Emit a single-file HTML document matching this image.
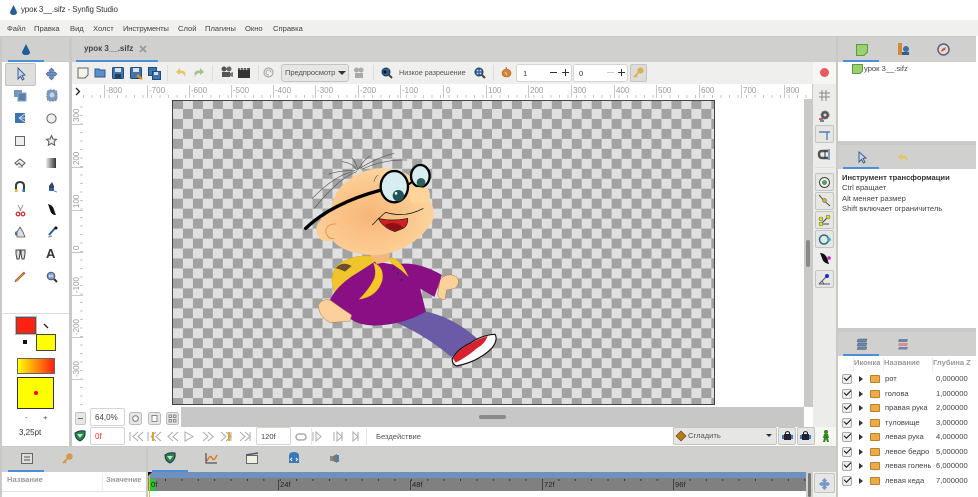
<!DOCTYPE html>
<html><head><meta charset="utf-8"><style>
html,body{margin:0;padding:0;background:#fff}
#r{position:relative;width:978px;height:497px;overflow:hidden;background:#fff;font-family:"Liberation Sans","DejaVu Sans",sans-serif;font-size:7.6px;color:#444;filter:blur(.35px)}
.a{position:absolute}
.t{position:absolute;white-space:nowrap;line-height:10px}
.g{background:#d0d0ce}
.b{position:absolute;box-sizing:border-box;border:1px solid #c4c4c2;border-radius:2px;background:#e6e6e4}
.e{position:absolute;box-sizing:border-box;border:1px solid #d4d4d2;border-radius:2px;background:#fff}
.u{position:absolute;height:2px;background:#4a90d9}
.v{position:absolute;color:#999;font-size:8px;line-height:10px;white-space:nowrap;transform:rotate(-90deg);transform-origin:0 0}
svg{position:absolute;overflow:visible}
.l{color:#999;top:86px;position:absolute;font-size:8px;line-height:9px}
.k{position:absolute;top:85px;width:1px;height:13px;background:#c8c8c8}
.bk{position:absolute;width:10px;height:10px;left:842px;box-sizing:border-box;border:1px solid #aaa;border-radius:2px;background:#eee}
.bk:after{content:"";position:absolute;left:1px;top:0;width:6px;height:3px;border-left:1.6px solid #111;border-bottom:1.6px solid #111;transform:rotate(-45deg)}
.ar{position:absolute;left:859px;width:0;height:0;border-left:4px solid #333;border-top:3px solid transparent;border-bottom:3px solid transparent}
.fo{position:absolute;left:870px;width:10px;height:8px;background:#eeaa44;border:1px solid #b88030;box-sizing:border-box;border-radius:1px}
</style></head><body><div id="r">

<!-- title -->
<svg style="left:9px;top:5px" width="9" height="11" viewBox="0 0 9 11"><path d="M4.5 0L8 7Q8 10 4.5 10Q1 10 1 7Z" fill="#2a5f96"/></svg>
<div class="t" style="left:21px;top:5px;font-size:8px;letter-spacing:-.12px;color:#333">урок 3__.sifz - Synfig Studio</div>

<!-- menu -->
<div class="a" style="left:0;top:20px;width:978px;height:16px;background:#f0f0ef"></div>
<div class="t" style="left:7px;top:24px">Файл</div><div class="t" style="left:34px;top:24px">Правка</div><div class="t" style="left:70px;top:24px">Вид</div><div class="t" style="left:93px;top:24px">Холст</div><div class="t" style="left:123px;top:24px;letter-spacing:-.15px">Инструменты</div><div class="t" style="left:178px;top:24px">Слой</div><div class="t" style="left:205px;top:24px">Плагины</div><div class="t" style="left:245px;top:24px">Окно</div><div class="t" style="left:273px;top:24px">Справка</div>

<!-- base gray -->
<div class="a" style="left:0;top:36px;width:978px;height:461px;background:#c9c9c7"></div>

<!-- left panel -->
<div class="a g" style="left:2px;top:37px;width:67px;height:24px"></div>
<div class="u" style="left:8px;top:60px;width:36px"></div>
<svg style="left:21px;top:44px" width="10" height="12" viewBox="0 0 10 12"><path d="M5 0L9 8Q9 11 5 11Q1 11 1 8Z" fill="#1f5c9c"/></svg>
<div class="a" style="left:2px;top:62px;width:67px;height:384px;background:#fff"></div>
<div class="a" style="left:3px;top:313px;width:66px;height:1px;background:#ddd"></div>
<div class="b" style="left:5px;top:63px;width:31px;height:23px;background:#dededc"></div>

<!-- tools -->
<svg style="left:15px;top:67px" width="11" height="14" viewBox="0 0 11 14"><path d="M3 1L3 12L5.5 9.5L7.5 13L9 12L7 8.5L10 8Z" fill="#c8d4e8" stroke="#41608f"/></svg>
<svg style="left:45px;top:67px" width="13" height="14" viewBox="0 0 13 14"><path d="M6.5 1L9 3.5L7.5 5.5L10 5L12 7L10 9L7.5 8.5L9 10.5L6.5 13L4 10.5L5.5 8.5L3 9L1 7L3 5L5.5 5.5L4 3.5Z" fill="#6d8fc0" stroke="#47679a" stroke-width=".6"/></svg>
<svg style="left:14px;top:90px" width="13" height="12"><rect x="0" y="0" width="8" height="7" fill="#7894b8"/><rect x="4" y="3" width="8" height="8" fill="#5a7eb0" stroke="#8aa3c6"/></svg>
<svg style="left:46px;top:89px" width="12" height="13"><rect x="1" y="1" width="10" height="11" rx="3" fill="#7f97bd" stroke="#6d86ad" stroke-dasharray="2 1"/><circle cx="6" cy="6" r="2.5" fill="#c7d3e5"/></svg>
<svg style="left:14px;top:112px" width="12" height="12"><rect x="1" y="1" width="10" height="10" fill="#3f74ae"/><path d="M5 6L11 2M5 6L11 6M5 6L11 10" stroke="#cfe0f0" fill="none"/></svg>
<svg style="left:46px;top:113px" width="11" height="11"><circle cx="5.5" cy="5.5" r="4.6" fill="#eee" stroke="#666"/></svg>
<svg style="left:15px;top:136px" width="10" height="10"><rect x=".5" y=".5" width="9" height="9" fill="#eee" stroke="#666"/></svg>
<svg style="left:46px;top:135px" width="11" height="11" viewBox="0 0 11 11"><path d="M5.5 .5L7 4L10.5 4.3L8 6.7L8.7 10.3L5.5 8.500L2.3 10.3L3 6.7L.5 4.3L4 4Z" fill="#eee" stroke="#555"/></svg>
<svg style="left:14px;top:158px" width="12" height="11" viewBox="0 0 12 11"><path d="M1 5L6 1L11 5L8 8L5 5L3 7Z" fill="#eee" stroke="#555"/><path d="M4 9L9 9" stroke="#999"/></svg>
<svg style="left:46px;top:158px" width="10" height="10"><defs><linearGradient id="gr"><stop offset="0" stop-color="#eee"/><stop offset="1" stop-color="#333"/></linearGradient></defs><rect width="10" height="10" fill="url(#gr)"/></svg>
<svg style="left:14px;top:181px" width="12" height="12" viewBox="0 0 12 12"><path d="M2 10V5Q2 1 6 1Q10 1 10 5V10" fill="none" stroke="#3a3a3a" stroke-width="2"/><rect x="1" y="8" width="2.5" height="3" fill="#e4b530"/><rect x="8.5" y="8" width="2.5" height="3" fill="#2e73b5"/></svg>
<svg style="left:47px;top:181px" width="11" height="12" viewBox="0 0 11 12"><path d="M2 5L5 1L7 5V9H2Z" fill="#33485f"/><path d="M2 7H7V10H2Z" fill="#2f62a0"/><path d="M7 10L10 11" stroke="#6b94c4"/></svg>
<svg style="left:15px;top:204px" width="11" height="13" viewBox="0 0 11 13"><path d="M3 1L6 7M8 1L5 7" stroke="#999" fill="none"/><circle cx="3" cy="10" r="1.8" fill="none" stroke="#c73a3a" stroke-width="1.3"/><circle cx="8" cy="10" r="1.8" fill="none" stroke="#c73a3a" stroke-width="1.3"/></svg>
<svg style="left:47px;top:204px" width="10" height="12" viewBox="0 0 10 12"><path d="M1 0Q6 1 7 6L9 11Q4 11 3 6Z" fill="#111"/></svg>
<svg style="left:14px;top:226px" width="12" height="12" viewBox="0 0 12 12"><path d="M6 1L9 6L11 11H3L3 6Z" fill="#ddd" stroke="#555" stroke-width=".8"/><path d="M1 6L3 5V10L1 9Z" fill="#3a78b8"/></svg>
<svg style="left:47px;top:226px" width="11" height="12" viewBox="0 0 11 12"><path d="M9 1L2 9" stroke="#2560a0" stroke-width="2"/><circle cx="9" cy="2" r="1.5" fill="#111"/><path d="M1 11L5 10" stroke="#888"/></svg>
<svg style="left:15px;top:249px" width="11" height="11" viewBox="0 0 11 11"><path d="M1 1H5V5L4 10H2L1 5ZM6 1H10V5L9 10H7L6 5Z" fill="#ddd" stroke="#444"/></svg>
<div class="t" style="left:46px;top:247px;font:bold 13px/14px 'Liberation Sans',sans-serif;color:#333">A</div>
<svg style="left:14px;top:271px" width="12" height="12" viewBox="0 0 12 12"><path d="M10 1L11 2.5L3 10L1 11L1.5 9Z" fill="#d9964a" stroke="#8b5a2b" stroke-width=".6"/><path d="M9.5 1L11 2.5L10 3.5L8.5 2Z" fill="#d05050"/></svg>
<svg style="left:46px;top:271px" width="12" height="12" viewBox="0 0 12 12"><circle cx="5" cy="5" r="3.8" fill="#7ba4d4" stroke="#555"/><path d="M8 8L11 11" stroke="#333" stroke-width="2"/><path d="M3 5H7" stroke="#fff"/></svg>

<!-- colours -->
<div class="a" style="left:16px;top:317px;width:20px;height:17px;box-sizing:border-box;background:#ff2112;border:1px solid #555;outline:1px solid #bbb"></div>
<div class="a" style="left:36px;top:334px;width:20px;height:17px;box-sizing:border-box;background:#ff0;border:1px solid #444"></div>
<svg style="left:43px;top:323px" width="6" height="6"><path d="M1 1L5 5" stroke="#222" stroke-width="1.3"/></svg>
<div class="a" style="left:23px;top:340px;width:4px;height:4px;background:#111"></div>
<div class="a" style="left:17px;top:358px;width:38px;height:16px;box-sizing:border-box;border:1px solid #666;background:linear-gradient(90deg,#ff0,#ff2112)"></div>
<div class="a" style="left:17px;top:377px;width:37px;height:32px;box-sizing:border-box;border:1px solid #333;background:#ff0"></div>
<div class="a" style="left:34px;top:391px;width:4px;height:4px;border-radius:50%;background:#f00"></div>
<div class="t" style="left:25px;top:413px">-</div><div class="t" style="left:43px;top:413px">+</div>
<div class="t" style="left:19px;top:428px;color:#333;font-size:8px">3,25pt</div>

<!-- tab strip -->
<div class="a g" style="left:72px;top:37px;width:764px;height:25px"></div>
<div class="u" style="left:76px;top:60px;width:82px"></div>
<div class="t" style="left:84px;top:44px;font-weight:bold;font-size:8px;color:#444">урок 3__.sifz</div>
<svg style="left:139px;top:45px" width="8" height="8"><path d="M1 1L7 7M7 1L1 7" stroke="#999" stroke-width="1.6"/></svg>

<!-- toolbar -->
<div class="a" style="left:72px;top:62px;width:741px;height:22px;background:#efefee"></div>
<svg style="left:76px;top:66px" width="14" height="14" viewBox="0 0 14 14"><path d="M2 2H12V9L9 12H2Z" fill="#f4f4e8" stroke="#666"/></svg>
<svg style="left:94px;top:67px" width="13" height="12"><path d="M1 2H5L6 3H11V10H1Z" fill="#5a8fc7" stroke="#2e5a8c"/></svg>
<svg style="left:112px;top:67px" width="12" height="12"><rect x=".5" y=".5" width="11" height="11" rx="1" fill="#3f75ae" stroke="#1f4a7a"/><rect x="3" y="1" width="6" height="4" fill="#dde"/><rect x="3" y="7" width="6" height="4" fill="#1f3d60"/></svg>
<svg style="left:130px;top:67px" width="13" height="13"><rect x=".5" y=".5" width="11" height="11" rx="1" fill="#3f75ae" stroke="#1f4a7a"/><rect x="3" y="1" width="6" height="4" fill="#dde"/><path d="M7 8L12 12" stroke="#e08a20" stroke-width="2.5"/></svg>
<svg style="left:148px;top:67px" width="13" height="13"><rect x=".5" y=".5" width="8" height="8" fill="#3f75ae" stroke="#1f4a7a"/><rect x="4.5" y="4.5" width="8" height="8" fill="#3f75ae" stroke="#1f4a7a"/><rect x="6" y="5" width="4" height="3" fill="#dde"/></svg>
<div class="a" style="left:167px;top:65px;width:1px;height:16px;background:#ddd"></div>
<svg style="left:175px;top:67px" width="12" height="11" viewBox="0 0 12 11"><path d="M5 1L1 5L5 8V6Q9 6 10 10Q12 3 5 3.5Z" fill="#e6c565"/></svg>
<svg style="left:193px;top:67px" width="12" height="11" viewBox="0 0 12 11"><path d="M7 1L11 5L7 8V6Q3 6 2 10Q0 3 7 3.5Z" fill="#9cc48c"/></svg>
<div class="a" style="left:212px;top:65px;width:1px;height:16px;background:#ddd"></div>
<svg style="left:220px;top:66px" width="13" height="13"><circle cx="4" cy="3" r="2.5" fill="#555"/><circle cx="9" cy="3" r="2.5" fill="#666"/><rect x="2" y="6" width="8" height="5" fill="#555"/><path d="M10 7L13 6V11L10 10Z" fill="#777"/></svg>
<svg style="left:238px;top:67px" width="12" height="12"><rect y="3" width="12" height="8" fill="#333"/><path d="M0 1H12V3H0Z" fill="#555"/><path d="M2 1L3 3M5 1L6 3M8 1L9 3" stroke="#ddd"/></svg>
<div class="a" style="left:258px;top:65px;width:1px;height:16px;background:#ddd"></div>
<svg style="left:263px;top:67px" width="11" height="11"><circle cx="5.5" cy="5.5" r="4.5" fill="none" stroke="#aaa" stroke-width="1.2"/><path d="M8 5.5A2.5 2.5 0 1 0 6 8" fill="none" stroke="#aaa"/></svg>
<div class="b" style="left:281px;top:64px;width:68px;height:18px;border-radius:3px"></div>
<div class="t" style="left:285px;top:68px;color:#555;letter-spacing:-.1px">Предпросмотр</div>
<div class="a" style="left:338px;top:71px;width:0;height:0;border-left:4px solid transparent;border-right:4px solid transparent;border-top:4px solid #333"></div>
<svg style="left:353px;top:67px" width="12" height="12"><circle cx="3.5" cy="3" r="2.5" fill="#aaa"/><circle cx="8" cy="3" r="2.5" fill="#aaa"/><rect x="2" y="6" width="8" height="5" fill="#aaa"/></svg>
<div class="a" style="left:373px;top:65px;width:1px;height:16px;background:#ddd"></div>
<svg style="left:381px;top:67px" width="12" height="12"><circle cx="5" cy="5" r="4" fill="#2f5f95" stroke="#1c3c60"/><circle cx="4" cy="5" r="1.5" fill="#111"/><path d="M8 8L11 11" stroke="#444" stroke-width="2"/></svg>
<div class="t" style="left:399px;top:68px;color:#555;font-size:7.2px">Низкое разрешение</div>
<svg style="left:474px;top:67px" width="12" height="12"><circle cx="5" cy="5" r="4" fill="#2f5f95" stroke="#1c3c60"/><circle cx="3.5" cy="3.5" r="1" fill="#bcd"/><circle cx="6.5" cy="6.5" r="1" fill="#bcd"/><circle cx="6.5" cy="3.5" r="1" fill="#bcd"/><circle cx="3.5" cy="6.5" r="1" fill="#bcd"/><path d="M8 8L11 11" stroke="#444" stroke-width="2"/></svg>
<div class="a" style="left:493px;top:65px;width:1px;height:16px;background:#ddd"></div>
<svg style="left:501px;top:67px" width="11" height="11"><path d="M5 0L6 2Q10 3 10 6Q10 10 5.5 10Q1 10 1 6Q1 3 5 2Z" fill="#d4823a" stroke="#a05c20" stroke-width=".5"/><path d="M4 5L6 8" stroke="#f2cfa8"/></svg>
<div class="e" style="left:516px;top:64px;width:32px;height:18px;border-right:0;border-radius:3px 0 0 3px"></div><div class="t" style="left:523px;top:69px;color:#333">1</div>
<div class="e" style="left:548px;top:64px;width:24px;height:18px;border-left:0;border-radius:0 3px 3px 0"></div>
<div class="a" style="left:550px;top:72px;width:7px;height:1.3px;background:#333"></div><div class="a" style="left:565px;top:69px;width:1.3px;height:7px;background:#333"></div><div class="a" style="left:562px;top:72px;width:7px;height:1.3px;background:#333"></div>
<div class="e" style="left:573px;top:64px;width:32px;height:18px;border-right:0;border-radius:3px 0 0 3px"></div><div class="t" style="left:579px;top:69px;color:#333">0</div>
<div class="e" style="left:605px;top:64px;width:23px;height:18px;border-left:0;border-radius:0 3px 3px 0"></div>
<div class="a" style="left:607px;top:72px;width:7px;height:1.3px;background:#ccc"></div><div class="a" style="left:621px;top:69px;width:1.3px;height:7px;background:#333"></div><div class="a" style="left:618px;top:72px;width:7px;height:1.3px;background:#333"></div>
<div class="b" style="left:630px;top:64px;width:17px;height:18px;background:#dcdcd8"></div>
<svg style="left:632px;top:66px" width="13" height="13" viewBox="0 0 13 13"><circle cx="8.5" cy="4.5" r="3" fill="#e0ac50"/><path d="M6.5 6.5L2 11M3.5 9.5L5 11" stroke="#e0ac50" stroke-width="1.6"/></svg>

<!-- ruler -->
<div class="a" style="left:72px;top:84px;width:740px;height:15px;background:#fff"></div>
<div class="a" style="left:83px;top:95px;width:729px;height:3px;background-image:linear-gradient(90deg,#c8c8c8 1px,transparent 1px);background-size:8.5px 3px"></div>
<svg style="left:75px;top:87px" width="6" height="9"><path d="M1 1L4.5 4.5L1 8" stroke="#222" stroke-width="1.3" fill="none"/></svg>
<div class="k" style="left:104px"></div><div class="l" style="left:106px">-800</div>
<div class="k" style="left:147px"></div><div class="l" style="left:149px">-700</div>
<div class="k" style="left:189px"></div><div class="l" style="left:191px">-600</div>
<div class="k" style="left:231px"></div><div class="l" style="left:233px">-500</div>
<div class="k" style="left:273px"></div><div class="l" style="left:275px">-400</div>
<div class="k" style="left:315px"></div><div class="l" style="left:317px">-300</div>
<div class="k" style="left:358px"></div><div class="l" style="left:360px">-200</div>
<div class="k" style="left:400px"></div><div class="l" style="left:402px">-100</div>
<div class="k" style="left:443px"></div><div class="l" style="left:446px">0</div>
<div class="k" style="left:486px"></div><div class="l" style="left:488px">100</div>
<div class="k" style="left:528px"></div><div class="l" style="left:530px">200</div>
<div class="k" style="left:571px"></div><div class="l" style="left:573px">300</div>
<div class="k" style="left:614px"></div><div class="l" style="left:616px">400</div>
<div class="k" style="left:656px"></div><div class="l" style="left:658px">500</div>
<div class="k" style="left:699px"></div><div class="l" style="left:701px">600</div>
<div class="k" style="left:741px"></div><div class="l" style="left:743px">700</div>
<div class="k" style="left:784px"></div><div class="l" style="left:786px">800</div>

<!-- canvas white + vertical ruler -->
<div class="a" style="left:72px;top:99px;width:732px;height:308px;background:#fff"></div>
<div class="a" style="left:80px;top:99px;width:3px;height:308px;background-image:linear-gradient(0deg,#c8c8c8 1px,transparent 1px);background-size:3px 8.5px"></div>
<div class="a" style="left:72px;top:124px;width:11px;height:1px;background:#c8c8c8"></div><div class="v" style="left:72px;top:122px">300</div>
<div class="a" style="left:72px;top:167px;width:11px;height:1px;background:#c8c8c8"></div><div class="v" style="left:72px;top:165px">200</div>
<div class="a" style="left:72px;top:210px;width:11px;height:1px;background:#c8c8c8"></div><div class="v" style="left:72px;top:208px">100</div>
<div class="a" style="left:72px;top:252px;width:11px;height:1px;background:#c8c8c8"></div><div class="v" style="left:72px;top:250px">0</div>
<div class="a" style="left:72px;top:295px;width:11px;height:1px;background:#c8c8c8"></div><div class="v" style="left:72px;top:293px">-100</div>
<div class="a" style="left:72px;top:337px;width:11px;height:1px;background:#c8c8c8"></div><div class="v" style="left:72px;top:335px">-200</div>
<div class="a" style="left:72px;top:379px;width:11px;height:1px;background:#c8c8c8"></div><div class="v" style="left:72px;top:377px">-300</div>

<!-- checker -->
<div class="a" style="left:172px;top:100px;width:543px;height:305px;box-sizing:border-box;border:1px solid #444;background-color:#e0e0e0;background-image:conic-gradient(#a2a2a2 25%,transparent 0 50%,#a2a2a2 0 75%,transparent 0);background-size:19.95px 19.95px;background-position:9.97px -2px"></div>

<!-- character -->
<svg style="left:295px;top:140px" width="215" height="240" viewBox="0 0 645 720">
<path d="M110 420Q112 385 135 370Q180 340 240 350L260 420L180 470L120 470Z" fill="#f0c42c" stroke="#c89a18"/>
<path d="M122 385Q140 362 170 378L150 395Q130 385 122 385Z" fill="#6b5030"/>
<path d="M435 420Q455 395 485 410Q498 430 480 445L455 450L450 478Q430 480 428 462Z" fill="#fcd09a" stroke="#b07a50" stroke-width="1.5"/>
<path d="M305 548L390 515Q470 530 545 595Q520 625 468 650Q400 590 305 548Z" fill="#6b5aa6" stroke="#5b4d90"/>
<path d="M472 655Q490 625 525 610Q560 585 600 583Q610 600 590 625Q550 665 485 678Q470 672 472 655Z" fill="#fff" stroke="#111" stroke-width="3.500"/>
<path d="M474 655Q490 628 525 612Q550 596 578 588Q570 612 545 625Q520 648 482 668Z" fill="#d8212e"/>
<path d="M240 365L300 375Q360 360 440 405L418 470L375 445L392 515Q320 555 240 556Q190 555 165 535L105 480Q125 440 170 410Q210 385 240 365Z" fill="#8b0f84" stroke="#6c0a66"/>
<path d="M280 355Q310 345 340 410L318 390L290 370Z" fill="#f4c62a" stroke="#c99c18"/>
<path d="M235 368Q268 380 262 420Q248 470 192 478Q225 445 238 415Q245 395 235 368Z" fill="#f4c62a" stroke="#c99c18"/>
<circle cx="296" cy="385" r="3" fill="#2a2a5a"/><circle cx="308" cy="400" r="3" fill="#2a2a5a"/><circle cx="319" cy="420" r="3" fill="#2a2a5a"/>
<path d="M105 480Q80 475 70 495Q70 530 105 548L165 543L170 525L140 505Z" fill="#fcd09a" stroke="#b07a50" stroke-width="1.5"/>
<path d="M225 345L285 340L280 365L245 372Z" fill="#f5b878"/>
<defs><radialGradient id="sk" cx=".45" cy=".55" r=".65"><stop offset="0" stop-color="#f8b678"/><stop offset=".55" stop-color="#fbc88e"/><stop offset="1" stop-color="#fddaa6"/></radialGradient></defs>
<path d="M110 200C120 130 200 80 270 85C320 85 350 110 385 135C405 145 408 165 400 178C425 205 420 245 395 268C360 312 300 345 235 345C180 345 130 325 112 300C80 312 60 290 65 260C70 240 95 230 110 200Z" fill="url(#sk)"/>
<path d="M125 252Q95 250 92 275Q100 300 118 295" fill="none" stroke="#e09a60" stroke-width="3"/>
<g fill="none" stroke="#555" stroke-width="2" stroke-linecap="round">
<path d="M185 95Q130 115 58 205"/><path d="M175 95Q120 105 52 175"/><path d="M180 92Q140 90 102 102"/><path d="M185 90Q175 70 142 65"/><path d="M188 90Q185 70 172 55"/><path d="M190 88Q205 60 225 48"/><path d="M195 85Q240 55 297 40"/><path d="M200 88Q265 58 335 60"/>
</g>
<path d="M32 265Q110 190 258 150" fill="none" stroke="#000" stroke-width="10" stroke-linecap="round"/>
<ellipse cx="376" cy="108" rx="28" ry="33" fill="#d8edef" stroke="#000" stroke-width="7"/>
<circle cx="378" cy="127" r="13" fill="#2c5f60"/>
<path d="M338 135L352 125" stroke="#000" stroke-width="6"/>
<path d="M345 145Q375 135 400 150Q410 175 400 185Q370 195 345 185Z" fill="#fdd49c"/>
<ellipse cx="298" cy="140" rx="41" ry="47" fill="#d8edef" stroke="#000" stroke-width="7"/>
<circle cx="310" cy="167" r="17" fill="#1f5456"/><circle cx="303" cy="160" r="4" fill="#fff"/>
<path d="M237 125Q242 108 250 105" stroke="#555" stroke-width="2" fill="none"/>
<path d="M232 255Q250 235 272 217Q330 235 385 205" fill="none" stroke="#222" stroke-width="2.5"/>
<path d="M250 235Q290 245 338 235Q340 255 325 265L300 275Q265 265 250 235Z" fill="#d21f22" stroke="#222" stroke-width="2"/>
<path d="M270 255Q300 240 325 262L300 275Q280 268 270 255Z" fill="#8f1015"/>
</svg>

<!-- right of canvas -->
<div class="a" style="left:804px;top:99px;width:8px;height:308px;background:#c9c9c7"></div>
<div class="a" style="left:806px;top:240px;width:4px;height:27px;background:#8a8a88;border-radius:2px"></div>
<div class="a" style="left:804px;top:407px;width:9px;height:20px;background:#fff"></div>

<!-- right tools -->
<div class="a" style="left:813px;top:62px;width:23px;height:365px;background:#ececea"></div>
<div class="a" style="left:813px;top:62px;width:23px;height:22px;background:#f6f6f5"></div>
<div class="a" style="left:820px;top:68px;width:9px;height:9px;border-radius:50%;background:#e85a5e"></div>
<svg style="left:818px;top:89px" width="13" height="13"><path d="M1 4H12M1 8H12M4 1V12M8 1V12" stroke="#888"/></svg>
<svg style="left:818px;top:109px" width="13" height="13"><circle cx="7" cy="6" r="4" fill="#555" stroke="#777" stroke-dasharray="2 1"/><circle cx="7" cy="6" r="1.5" fill="#ddd"/><path d="M1 10H5" stroke="#c33" stroke-width="1.5"/><path d="M2 12H6" stroke="#36a" stroke-width="1.5"/></svg>
<div class="b" style="left:815px;top:125px;width:19px;height:18px"></div>
<svg style="left:819px;top:128px" width="12" height="12"><path d="M0 4H11M8 4V12" stroke="#3c6ea5" stroke-width="1.2"/></svg>
<svg style="left:818px;top:149px" width="12" height="11"><path d="M10 2H4Q1 2 1 5Q1 9 4 9H10" fill="none" stroke="#555" stroke-width="2.5"/><path d="M7 1V10" stroke="#333"/><path d="M11 0V11" stroke="#3c6ea5" stroke-width="1.2"/></svg>
<div class="a" style="left:815px;top:167px;width:19px;height:1px;background:#ddd"></div>
<div class="b" style="left:815px;top:173px;width:19px;height:18px"></div>
<svg style="left:818px;top:176px" width="13" height="13"><circle cx="6.5" cy="6.5" r="5" fill="#eee" stroke="#444"/><circle cx="6.5" cy="6.5" r="2" fill="#3dbb3d" stroke="#333" stroke-width=".5"/></svg>
<div class="b" style="left:815px;top:192px;width:19px;height:18px"></div>
<svg style="left:818px;top:194px" width="13" height="13"><path d="M1 1Q5 6 12 12" fill="none" stroke="#444"/><circle cx="6.5" cy="6.5" r="2" fill="#d8b020" stroke="#555" stroke-width=".5"/></svg>
<div class="b" style="left:815px;top:211px;width:19px;height:18px"></div>
<svg style="left:818px;top:214px" width="13" height="13"><path d="M3 10L10 3M3 10L11 10" stroke="#444"/><circle cx="10" cy="3" r="2" fill="#e6e020" stroke="#555" stroke-width=".5"/><circle cx="3" cy="5" r="2" fill="#e6e020" stroke="#555" stroke-width=".5"/><circle cx="3" cy="10" r="2" fill="#e6e020" stroke="#555" stroke-width=".5"/></svg>
<div class="b" style="left:815px;top:230px;width:19px;height:18px"></div>
<svg style="left:818px;top:233px" width="13" height="13"><circle cx="6" cy="6.5" r="4.5" fill="none" stroke="#1f6f80" stroke-width="1.5"/><circle cx="11" cy="6.5" r="1.8" fill="#20b8c0"/></svg>
<svg style="left:819px;top:252px" width="13" height="13" viewBox="0 0 13 13"><path d="M1 1Q6 1 8 6L10 12Q4 11 3 6Z" fill="#111"/><circle cx="10" cy="6" r="1.8" fill="#d020c0"/></svg>
<div class="b" style="left:815px;top:270px;width:19px;height:18px"></div>
<svg style="left:818px;top:273px" width="13" height="13"><path d="M1 11L8 4M1 11H12M4 8L6 11" stroke="#556" fill="none"/><circle cx="9" cy="3" r="2" fill="#1c30c8"/></svg>

<!-- bottom zoom row -->
<div class="a" style="left:72px;top:407px;width:109px;height:20px;background:#fff"></div>
<div class="a" style="left:181px;top:407px;width:623px;height:20px;background:#c6c8c6"></div>
<div class="a" style="left:479px;top:415px;width:27px;height:4px;border-radius:2px;background:#8a8a88"></div>
<div class="b" style="left:75px;top:412px;width:11px;height:13px"></div><div class="a" style="left:78px;top:418px;width:5px;height:1px;background:#666"></div>
<div class="e" style="left:90px;top:408px;width:35px;height:18px"></div><div class="t" style="left:95px;top:413px;color:#444;font-size:8px">64,0%</div>
<svg style="left:129px;top:412px" width="13" height="13"><rect x=".5" y=".5" width="12" height="12" rx="2" fill="#e6e6e4" stroke="#bbb"/><circle cx="6.5" cy="6.5" r="2.8" fill="#fff" stroke="#777"/></svg>
<svg style="left:148px;top:412px" width="13" height="13"><rect x=".5" y=".5" width="12" height="12" rx="2" fill="#e6e6e4" stroke="#bbb"/><rect x="4" y="3.5" width="5" height="6" fill="#fff" stroke="#888"/></svg>
<svg style="left:166px;top:412px" width="13" height="13"><rect x=".5" y=".5" width="12" height="12" rx="2" fill="#e6e6e4" stroke="#bbb"/><rect x="3" y="3" width="2.5" height="2.5" fill="none" stroke="#888"/><rect x="7.5" y="3" width="2.5" height="2.5" fill="none" stroke="#888"/><rect x="3" y="7.5" width="2.5" height="2.5" fill="none" stroke="#888"/><rect x="7.5" y="7.5" width="2.5" height="2.5" fill="none" stroke="#888"/></svg>

<!-- anim row -->
<div class="a" style="left:72px;top:427px;width:764px;height:19px;background:#fff"></div>
<div class="a" style="left:813px;top:427px;width:23px;height:19px;background:#f6f6f5"></div>
<svg style="left:74px;top:430px" width="12" height="12" viewBox="0 0 12 12"><path d="M1 3Q5 0 11 1Q12 8 6 11Q1 9 1 3Z" fill="#28805a" stroke="#234"/><path d="M3 4H9L6 8Z" fill="#bfe8a0"/></svg>
<div class="e" style="left:90px;top:427px;width:35px;height:18px"></div><div class="t" style="left:95px;top:432px;color:#f03030;font-size:8px">0f</div>
<svg style="left:129px;top:431px" width="132" height="11" viewBox="0 0 132 11" fill="none" stroke="#aaa">
<path d="M1 1V10M9 1L4 5.5L9 10M14 1L9 5.5L14 10"/>
<path d="M19 1V10M27 1L22 5.5L27 10M32 1L27 5.5L32 10"/><path d="M24 1V10" stroke="#d9a830" stroke-width="2"/>
<path d="M44 1L39 5.5L44 10M49 1L44 5.5L49 10"/>
<path d="M56 1L64 5.5L56 10Z"/>
<path d="M74 1L79 5.5L74 10M79 1L84 5.5L79 10"/>
<path d="M92 1L97 5.5L92 10M97 1L102 5.5L97 10M102 1V10"/><path d="M100 1V10" stroke="#d9a830" stroke-width="2"/>
<path d="M111 1L116 5.5L111 10M116 1L121 5.5L116 10M121 1V10"/>
</svg>
<div class="e" style="left:256px;top:427px;width:35px;height:18px"></div><div class="t" style="left:261px;top:432px;color:#444;font-size:7.5px">120f</div>
<svg style="left:295px;top:431px" width="70" height="11" viewBox="0 0 70 11" fill="none" stroke="#aaa">
<rect x="1" y="3" width="10" height="6" rx="3" stroke-width="1.5"/>
<path d="M18 1V10M21 1L26 5.5L21 10Z"/><path d="M39 1V10M42 1L47 5.5L42 10ZM47 1V10"/><path d="M58 1L63 5.5L58 10ZM63 1V10"/>
</svg>
<div class="a" style="left:311px;top:428px;width:1px;height:17px;background:#e6e6e6"></div><div class="a" style="left:366px;top:428px;width:1px;height:17px;background:#e6e6e6"></div>
<div class="t" style="left:376px;top:432px;color:#555">Бездействие</div>
<div class="b" style="left:673px;top:427px;width:104px;height:18px"></div>
<svg style="left:676px;top:431px" width="10" height="10"><path d="M5 0L10 5L5 10L0 5Z" fill="#b87a1c" stroke="#6a4410" stroke-width=".7"/></svg>
<div class="t" style="left:688px;top:431px;color:#555">Сгладить</div>
<div class="a" style="left:766px;top:434px;width:0;height:0;border-left:3.5px solid transparent;border-right:3.5px solid transparent;border-top:3.5px solid #333"></div>
<div class="b" style="left:778px;top:427px;width:18px;height:18px"></div>
<div class="b" style="left:797px;top:427px;width:18px;height:18px"></div>
<svg style="left:782px;top:430px" width="11" height="11"><rect x="2" y="4" width="7" height="6" fill="#223"/><path d="M3.5 4V2.5Q5.5 .5 7.5 2.5V4" fill="none" stroke="#223"/><path d="M0 5H2V9H0ZM9 5H11V9H9Z" fill="#3a78c0"/></svg>
<svg style="left:800px;top:430px" width="11" height="11"><rect x="2" y="4" width="7" height="6" fill="#223"/><path d="M3.5 4V2.5Q5.5 .5 7.5 2.5V4" fill="none" stroke="#223"/><path d="M0 5H2V9H0ZM9 5H11V9H9Z" fill="#3a78c0"/></svg>
<svg style="left:821px;top:430px" width="10" height="12" viewBox="0 0 10 12"><circle cx="5" cy="2" r="2" fill="#2e8a1e"/><path d="M3 4H7L8 8H7L8 12H6L5 9L4 12H2L3 8H2Z" fill="#2e8a1e"/></svg>

<!-- bottom left params -->
<div class="a g" style="left:2px;top:447px;width:144px;height:25px"></div>
<div class="u" style="left:8px;top:470px;width:36px"></div>
<svg style="left:21px;top:453px" width="12" height="11"><rect x=".5" y=".5" width="11" height="10" fill="#ddd" stroke="#666"/><path d="M3 4H9M3 7H9" stroke="#555"/></svg>
<svg style="left:61px;top:452px" width="13" height="13"><circle cx="8.5" cy="4.5" r="3.2" fill="#d29a4c"/><path d="M6.5 6.5L2 11M3.5 9.5L5 11" stroke="#d29a4c" stroke-width="1.8"/></svg>
<div class="a" style="left:2px;top:472px;width:144px;height:25px;background:#fff"></div>
<div class="a" style="left:102px;top:473px;width:1px;height:18px;background:#eee"></div>
<div class="a" style="left:2px;top:491px;width:144px;height:1px;background:#e0e0e0"></div>
<div class="t" style="left:7px;top:475px;font-weight:bold;color:#999">Название</div>
<div class="t" style="left:106px;top:475px;font-weight:bold;color:#999">Значение</div>

<!-- timeline -->
<div class="a g" style="left:148px;top:447px;width:688px;height:25px"></div>
<div class="u" style="left:152px;top:470px;width:36px"></div>
<svg style="left:164px;top:452px" width="12" height="12" viewBox="0 0 12 12"><path d="M1 3Q5 0 11 1Q12 8 6 11Q1 9 1 3Z" fill="#28805a" stroke="#234"/><path d="M3 4H9L6 8Z" fill="#bfe8a0"/></svg>
<svg style="left:205px;top:452px" width="13" height="12"><path d="M1 1V11H12" stroke="#334" fill="none"/><path d="M2 9Q5 2 7 6T12 3" stroke="#e07a20" stroke-width="1.5" fill="none"/></svg>
<svg style="left:246px;top:453px" width="12" height="11"><rect x=".5" y="2.5" width="11" height="8" fill="#f0f0e0" stroke="#667"/><path d="M0 2L12 0" stroke="#556" stroke-width="1.5"/></svg>
<svg style="left:288px;top:451px" width="12" height="13"><path d="M1 12V5Q1 1 6 1Q11 1 11 5V12Z" fill="#3a78b8"/><path d="M4 7L2.5 8.5L4 10M8 7L9.5 8.5L8 10" stroke="#fff" fill="none"/></svg>
<svg style="left:329px;top:453px" width="12" height="11"><path d="M1 3H4V8H1Z" fill="#888"/><path d="M4 3L8 1V10L4 8Z" fill="#777"/><path d="M9 2V9" stroke="#4a80b8" stroke-width="2"/></svg>
<div class="a" style="left:148px;top:472px;width:658px;height:6px;background:#7091c0"></div>
<div class="a" style="left:148px;top:478px;width:658px;height:13px;background:#808080"></div>
<div class="a" style="left:148px;top:491px;width:665px;height:6px;background:#fff"></div>
<div class="a" style="left:165px;top:479px;width:641px;height:2px;background-image:linear-gradient(90deg,#333 1px,transparent 1px);background-size:16.4px 2px"></div>
<div class="a" style="left:149px;top:472px;width:1px;height:25px;background:#e2c020"></div>
<div class="a" style="left:150px;top:479px;width:5px;height:12px;background:#22cc22"></div>
<div class="a" style="left:148px;top:472px;width:0;height:0;border-left:4px solid #111;border-bottom:4px solid transparent"></div>
<div class="t" style="left:151px;top:480px;color:#222">0f</div>
<div class="a" style="left:278px;top:480px;width:1px;height:10px;background:#444"></div><div class="t" style="left:280px;top:480px;color:#222">24f</div>
<div class="a" style="left:410px;top:480px;width:1px;height:10px;background:#444"></div><div class="t" style="left:412px;top:480px;color:#222">48f</div>
<div class="a" style="left:542px;top:480px;width:1px;height:10px;background:#444"></div><div class="t" style="left:544px;top:480px;color:#222">72f</div>
<div class="a" style="left:673px;top:480px;width:1px;height:10px;background:#444"></div><div class="t" style="left:675px;top:480px;color:#222">96f</div>
<div class="a" style="left:806px;top:472px;width:7px;height:25px;background:#d0d0ce"></div>
<div class="a" style="left:808px;top:473px;width:3px;height:24px;background:#777;border-radius:2px"></div>
<div class="a" style="left:813px;top:472px;width:23px;height:25px;background:#f0f0ee"></div>
<div class="b" style="left:814px;top:473px;width:21px;height:20px"></div>
<svg style="left:818px;top:477px" width="13" height="13" viewBox="0 0 13 13"><path d="M6.5 1L9 3.5L7.5 5.5L10 5L12 7L10 9L7.5 8.5L9 10.5L6.5 13L4 10.5L5.5 8.5L3 9L1 7L3 5L5.5 5.5L4 3.5Z" fill="#7898c8"/></svg>

<!-- right column -->
<div class="a g" style="left:838px;top:37px;width:138px;height:25px"></div>
<div class="u" style="left:843px;top:60px;width:36px"></div>
<svg style="left:856px;top:44px" width="12" height="12" viewBox="0 0 12 12"><path d="M.5 .5H11.5V8L8 11.5H.5Z" fill="#9ccf72" stroke="#5c9a3c"/></svg>
<svg style="left:897px;top:43px" width="13" height="13"><rect x="1" y="0" width="4" height="12" fill="#d28a3a"/><circle cx="9" cy="6" r="3" fill="#3c6ea8"/><rect x="5" y="9" width="7" height="3" fill="#3c5a90"/></svg>
<svg style="left:937px;top:43px" width="13" height="13"><circle cx="6.5" cy="6.5" r="5.5" fill="#ddd" stroke="#665a80" stroke-width="1.5"/><path d="M9 4L5 6L4 9L8 7Z" fill="#d05a30"/></svg>
<div class="a" style="left:838px;top:62px;width:138px;height:79px;background:#fff"></div>
<svg style="left:852px;top:64px" width="11" height="10" viewBox="0 0 11 10"><path d="M.5 .5H10.5V7L8 9.5H.5Z" fill="#9ccf72" stroke="#5c9a3c"/></svg>
<div class="t" style="left:864px;top:64px;color:#444">урок 3__.sifz</div>

<div class="a g" style="left:838px;top:145px;width:138px;height:24px"></div>
<div class="u" style="left:843px;top:167px;width:36px"></div>
<svg style="left:857px;top:151px" width="10" height="13" viewBox="0 0 10 13"><path d="M2 1V11L4.5 8.5L6.5 12L8 11L6 7.5L9 7Z" fill="#c8d4e8" stroke="#41608f"/></svg>
<svg style="left:897px;top:152px" width="12" height="11" viewBox="0 0 12 11"><path d="M5 1L1 5L5 8V6Q9 6 10 10Q12 3 5 3.5Z" fill="#e6c565"/></svg>
<div class="a" style="left:838px;top:169px;width:138px;height:159px;background:#fff"></div>
<div class="t" style="left:842px;top:173px;font-weight:bold;color:#333">Инструмент трансформации</div>
<div class="t" style="left:842px;top:183px">Ctrl вращает</div>
<div class="t" style="left:842px;top:194px">Alt меняет размер</div>
<div class="t" style="left:842px;top:204px">Shift включает ограничитель</div>

<div class="a g" style="left:838px;top:332px;width:138px;height:24px"></div>
<div class="u" style="left:843px;top:354px;width:36px"></div>
<svg style="left:856px;top:338px" width="12" height="12"><path d="M2 1H11L10 4H1ZM2 5H11L10 8H1ZM2 9H11L10 11.5H1Z" fill="#6686aa" stroke="#456" stroke-width=".4"/></svg>
<svg style="left:897px;top:338px" width="12" height="12"><path d="M2 1H11L10 4H1Z" fill="#6686aa"/><path d="M2 5H11L10 8H1Z" fill="#e08a8a"/><path d="M2 9H11L10 11.5H1Z" fill="#6686aa"/></svg>
<div class="a" style="left:838px;top:356px;width:138px;height:141px;background:#fff"></div>
<div class="t" style="left:854px;top:358px;font-weight:bold;color:#999">Иконка</div>
<div class="t" style="left:884px;top:358px;font-weight:bold;color:#999">Название</div>
<div class="t" style="left:933px;top:358px;font-weight:bold;color:#999">Глубина Z</div>
<div class="a" style="left:853px;top:357px;width:1px;height:15px;background:#eee"></div><div class="a" style="left:883px;top:357px;width:1px;height:15px;background:#eee"></div><div class="a" style="left:932px;top:357px;width:1px;height:15px;background:#eee"></div>

<div class="bk" style="top:374px"></div><div class="ar" style="top:376px"></div><div class="fo" style="top:375px"></div><div class="t" style="left:885px;top:374px">рот</div><div class="t" style="left:936px;top:374px">0,000000</div>
<div class="bk" style="top:389px"></div><div class="ar" style="top:391px"></div><div class="fo" style="top:390px"></div><div class="t" style="left:885px;top:389px">голова</div><div class="t" style="left:936px;top:389px">1,000000</div>
<div class="bk" style="top:403px"></div><div class="ar" style="top:405px"></div><div class="fo" style="top:404px"></div><div class="t" style="left:885px;top:403px">правая рука</div><div class="t" style="left:936px;top:403px">2,000000</div>
<div class="bk" style="top:418px"></div><div class="ar" style="top:420px"></div><div class="fo" style="top:419px"></div><div class="t" style="left:885px;top:418px">туловище</div><div class="t" style="left:936px;top:418px">3,000000</div>
<div class="bk" style="top:432px"></div><div class="ar" style="top:434px"></div><div class="fo" style="top:433px"></div><div class="t" style="left:885px;top:432px">левая рука</div><div class="t" style="left:936px;top:432px">4,000000</div>
<div class="bk" style="top:447px"></div><div class="ar" style="top:449px"></div><div class="fo" style="top:448px"></div><div class="t" style="left:885px;top:447px">левое бедро</div><div class="t" style="left:936px;top:447px">5,000000</div>
<div class="bk" style="top:461px"></div><div class="ar" style="top:463px"></div><div class="fo" style="top:462px"></div><div class="t" style="left:885px;top:461px">левая голень</div><div class="t" style="left:936px;top:461px">6,000000</div>
<div class="bk" style="top:476px"></div><div class="ar" style="top:478px"></div><div class="fo" style="top:477px"></div><div class="t" style="left:885px;top:476px">левая кеда</div><div class="t" style="left:936px;top:476px">7,000000</div>

<div class="a" style="left:976px;top:36px;width:2px;height:461px;background:#fff"></div>
</div></body></html>
